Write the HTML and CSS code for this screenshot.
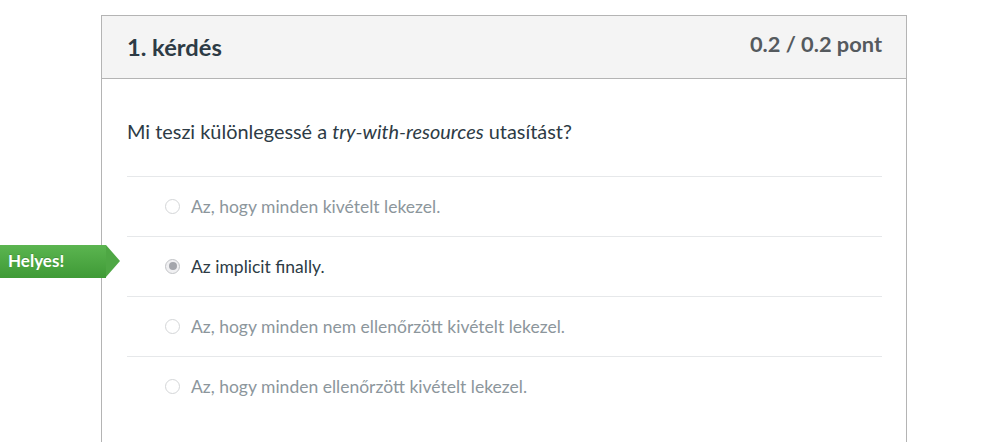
FILE: index.html
```html
<!DOCTYPE html>
<html lang="hu">
<head>
<meta charset="utf-8">
<link rel="stylesheet" href="styles.css">
</head>
<body>
<div class="quiz">
  <div class="card">
    <div class="card-header">
      <h2 class="q-title">1. kérdés</h2>
      <span class="q-points">0.2 / 0.2 pont</span>
    </div>
    <div class="card-body">
      <p class="q-text">Mi teszi különlegessé a <em>try-with-resources</em> utasítást?</p>
      <ul class="answers">
        <li class="answer"><span class="radio"></span><span class="a-text">Az, hogy minden kivételt lekezel.</span></li>
        <li class="answer selected">
          <span class="badge">Helyes!</span>
          <span class="radio checked"></span><span class="a-text">Az implicit finally.</span>
        </li>
        <li class="answer"><span class="radio"></span><span class="a-text">Az, hogy minden nem ellenőrzött kivételt lekezel.</span></li>
        <li class="answer"><span class="radio"></span><span class="a-text">Az, hogy minden ellenőrzött kivételt lekezel.</span></li>
      </ul>
    </div>
  </div>
</div>
</body>
</html>
```

FILE: styles.css
```css
html, body {
  margin: 0;
  padding: 0;
  background: #ffffff;
}
body {
  font-family: Lato, "Open Sans", "Liberation Sans", sans-serif;
  color: #2d3b45;
}
.quiz {
  padding: 15px 0 0 101px;
}
.card {
  width: 804px;
  border: 1px solid #b4b4b4;
  border-bottom: none;
}
.card-header {
  height: 62px;
  background: #f4f4f4;
  border-bottom: 1px solid #b4b4b4;
  display: flex;
  align-items: center;
  justify-content: space-between;
  padding: 0 24px 0 25px;
}
.q-title {
  margin: 0;
  font-size: 23.7px;
  font-weight: 700;
  color: #2d3b45;
}
.q-points {
  font-size: 21.8px;
  font-weight: 700;
  color: #555a5e;
  margin-top: -7px;
}
.card-body {
  padding: 0 24px 30px 25px;
}
.q-text {
  margin: 0;
  padding: 40px 0 0 0;
  height: 57px;
  font-size: 19.9px;
  line-height: 24px;
  border-bottom: 1px solid #e6e8ea;
}
.q-text em {
  font-style: italic;
}
.answers {
  list-style: none;
  margin: 0;
  padding: 0;
}
.answer {
  position: relative;
  height: 59px;
  border-bottom: 1px solid #e6e8ea;
  display: flex;
  align-items: center;
  padding-left: 38px;
  font-size: 17.5px;
  color: #8c969c;
}
.answer:last-child {
  border-bottom: none;
}
.answer.selected {
  color: #2d3b45;
}
.radio {
  width: 13px;
  height: 13px;
  border: 1px solid #d4d6d8;
  border-radius: 50%;
  margin-right: 11px;
  position: relative;
  box-sizing: content-box;
  flex: none;
  margin-top: -1px;
}
.radio.checked {
  border-color: #c2c4c7;
  background: #f0f0f2;
}
.radio.checked::after {
  content: "";
  position: absolute;
  left: 2.5px;
  top: 2.5px;
  width: 8px;
  height: 8px;
  border-radius: 50%;
  background: #a4a6ac;
}
.badge {
  position: absolute;
  left: -127px;
  top: 8px;
  width: 106px;
  height: 33px;
  box-sizing: border-box;
  padding: 7px 0 0 8px;
  color: #ffffff;
  font-weight: 700;
  font-size: 17px;
  line-height: 18px;
  background: linear-gradient(#5bb550, #3f9a36);
  text-shadow: 0 -1px 0 rgba(0,0,0,0.15);
}
.badge::after {
  content: "";
  position: absolute;
  right: -14px;
  top: 0;
  width: 0;
  height: 0;
  border-top: 16.5px solid transparent;
  border-bottom: 16.5px solid transparent;
  border-left: 14px solid #4ea744;
}
```
